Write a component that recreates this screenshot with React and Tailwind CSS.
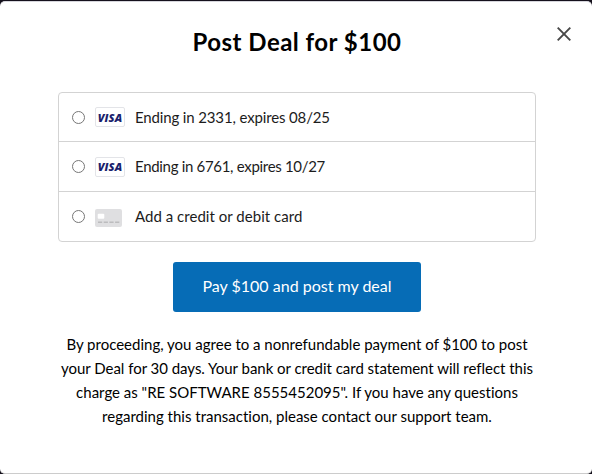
import React, { useState } from 'react';

const cards = [
  { id: 'visa-2331', brand: 'visa', label: 'Ending in 2331, expires 08/25', text: 'tracking-[-0.14px]' },
  { id: 'visa-6761', brand: 'visa', label: 'Ending in 6761, expires 10/27', text: 'pb-0.5 tracking-[-0.31px]' },
  { id: 'new', brand: 'none', label: 'Add a credit or debit card', text: 'pb-0.5 tracking-[0.03px]' },
];

function VisaIcon() {
  return (
    <span className="flex h-5 w-[30px] items-center justify-center rounded-[2px] border border-[#e3e4e8] bg-white">
      <span className="font-['Open_Sans',sans-serif] text-[11px] leading-none font-extrabold italic tracking-[0.15px] text-[#1a1f6c]">
        VISA
      </span>
    </span>
  );
}

function BlankCardIcon() {
  return (
    <svg width="27" height="18" viewBox="0 0 27 18" className="mt-[3px] shrink-0">
      <rect width="27" height="18" rx="2" fill="#dfdfe1" />
      <rect x="2.7" y="4.8" width="6.6" height="5" rx="1" fill="#fff" />
      <path d="M3 13.3h4.2M8.7 13.3h4.2M14.4 13.3h4.2M20.1 13.3h4.2" stroke="#bcbcbe" strokeWidth="1.6" />
    </svg>
  );
}

function App() {
  const [selected, setSelected] = useState('');

  return (
    <div className="h-[474px] w-[592px] bg-[#15111c] font-['Lato',sans-serif] text-black [font-variant-ligatures:none]">
      <div className="h-full pt-px">
        <div className="relative flex h-full flex-col items-center rounded-[5px] border-t border-b border-t-[#d6d6dc] border-b-[#cccccc] bg-white">
          <button type="button" aria-label="Close" className="absolute top-[25px] right-[21px]">
            <svg width="14" height="14" viewBox="0 0 14 14" fill="none" stroke="#484848" strokeWidth="1.9">
              <path d="M0.7 0.7l12.6 12.6M13.3 0.7L0.7 13.3" />
            </svg>
          </button>

          <h1 className="mt-[22px] ml-[2px] text-2xl leading-9 font-bold tracking-[0.48px] whitespace-nowrap">
            Post Deal for $100
          </h1>

          <div className="mt-8 ml-[2px] w-[478px] rounded-[4px] border border-[#d3d3d3]">
            {cards.map((card, i) => (
              <label
                key={card.id}
                className={
                  i === 0
                    ? 'flex h-12 items-center pl-[13px]'
                    : 'flex h-[50px] items-center border-t border-[#d3d3d3] pl-[13px]'
                }
              >
                <input
                  type="radio"
                  name="card"
                  className="m-0 h-[13px] w-[13px]"
                  checked={selected === card.id}
                  onChange={() => setSelected(card.id)}
                />
                <span className="ml-[10px] flex w-10 items-center">
                  {card.brand === 'visa' ? <VisaIcon /> : <BlankCardIcon />}
                </span>
                <span className={`text-[15px] leading-6 whitespace-nowrap text-[#1c1c1c] ${card.text}`}>
                  {card.label}
                </span>
              </label>
            ))}
          </div>

          <button
            type="button"
            className="mt-5 ml-[2px] h-[50px] w-[248px] rounded-[3px] bg-[#066cb6] pb-[3px] text-base whitespace-nowrap text-white"
          >
            Pay $100 and post my deal
          </button>

          <p className="mt-5 ml-[2px] text-center text-[15px] leading-6 whitespace-nowrap">
            <span className="block">By proceeding, you agree to a nonrefundable payment of $100 to post</span>
            <span className="block tracking-[-0.03px]">
              your Deal for 30 days. Your bank or credit card statement will reflect this
            </span>
            <span className="block">charge as "RE SOFTWARE 8555452095". If you have any questions</span>
            <span className="block">regarding this transaction, please contact our support team.</span>
          </p>
        </div>
      </div>
    </div>
  );
}

export default App;
